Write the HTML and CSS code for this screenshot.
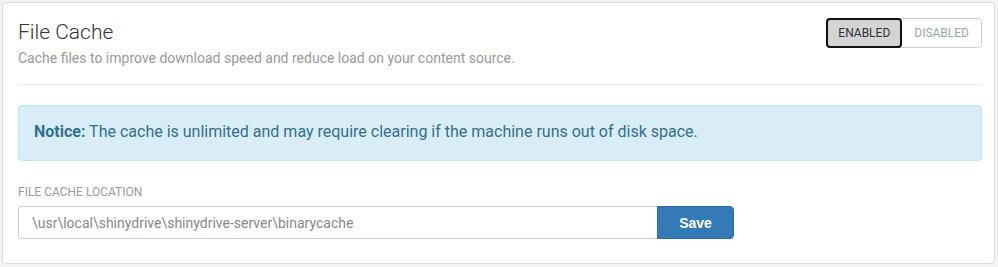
FILE: index.html
```html
<!DOCTYPE html>
<html>
<head>
<meta charset="utf-8">
<link rel="stylesheet" href="styles.css">
</head>
<body>
<div class="card">
  <div class="head">
    <div class="titles">
      <h1 class="title">File Cache</h1>
      <p class="sub">Cache files to improve download speed and reduce load on your content source.</p>
    </div>
    <div class="toggle">
      <button class="tbtn active">ENABLED</button>
      <button class="tbtn">DISABLED</button>
    </div>
  </div>
  <hr class="rule">
  <div class="alert"><strong>Notice:</strong> The cache is unlimited and may require clearing if the machine runs out of disk space.</div>
  <label class="label">FILE CACHE LOCATION</label>
  <div class="group">
    <input class="input" type="text" value="\usr\local\shinydrive\shinydrive-server\binarycache">
    <button class="save">Save</button>
  </div>
</div>
</body>
</html>
```
FILE: styles.css
```css
html, body { margin: 0; padding: 0; }
body {
  background: #f3f3f3;
  font-family: Roboto, "Liberation Sans", sans-serif;
  padding: 2px 3px 0 2px;
  width: 998px;
  box-sizing: border-box;
}
.card {
  background: #fff;
  border: 1px solid #dcdcdc;
  border-radius: 4px;
  height: 262px;
  box-sizing: border-box;
  padding: 15px 12px 0 15px;
}
.head {
  display: flex;
  justify-content: space-between;
  align-items: flex-start;
}
.title {
  margin: 1px 0 0;
  font-weight: 300;
  font-size: 21px;
  line-height: 26px;
  color: #333;
}
.sub {
  margin: 4px 0 0;
  font-size: 14px;
  line-height: 18px;
  color: #999;
}
.toggle {
  display: flex;
  border: 1px solid #ccc;
  border-radius: 4px;
  height: 30px;
  box-sizing: border-box;
}
.tbtn {
  font-family: Roboto, "Liberation Sans", sans-serif;
  font-size: 12px;
  background: #fff;
  border: 0;
  color: #9aa3b0;
  padding: 0 12px;
  height: 28px;
  border-radius: 0 4px 4px 0;
}
.tbtn.active {
  background: #d4d4d4;
  color: #333;
  border: 2px solid #111;
  border-radius: 4px;
  margin: -1px 0 0 -1px;
  height: 30px;
  padding: 0 10px;
}
.rule {
  border: 0;
  border-top: 1px solid #e8e8e8;
  margin: 17px 0 20px;
}
.alert {
  background: #d9edf7;
  border: 1px solid #bce8f1;
  border-radius: 4px;
  color: #31708f;
  font-size: 16px;
  line-height: 22px;
  padding: 15px 15px 17px;
}
.alert strong { font-weight: 700; }
.label {
  display: block;
  margin-top: 24px;
  font-size: 12px;
  line-height: 14px;
  color: #999;
}
.group {
  display: flex;
  margin-top: 7px;
}
.input {
  width: 639px;
  height: 33px;
  box-sizing: border-box;
  border: 1px solid #ccc;
  border-right: 0;
  border-radius: 4px 0 0 4px;
  padding: 0 13px;
  font-family: Roboto, "Liberation Sans", sans-serif;
  font-size: 14px;
  color: #888;
  outline: none;
}
.save {
  width: 77px;
  height: 33px;
  background: #337ab7;
  border: 1px solid #2e6da4;
  border-radius: 0 4px 4px 0;
  color: #fff;
  font-family: "Liberation Sans", Arial, sans-serif;
  font-weight: 700;
  font-size: 14px;
}
```
